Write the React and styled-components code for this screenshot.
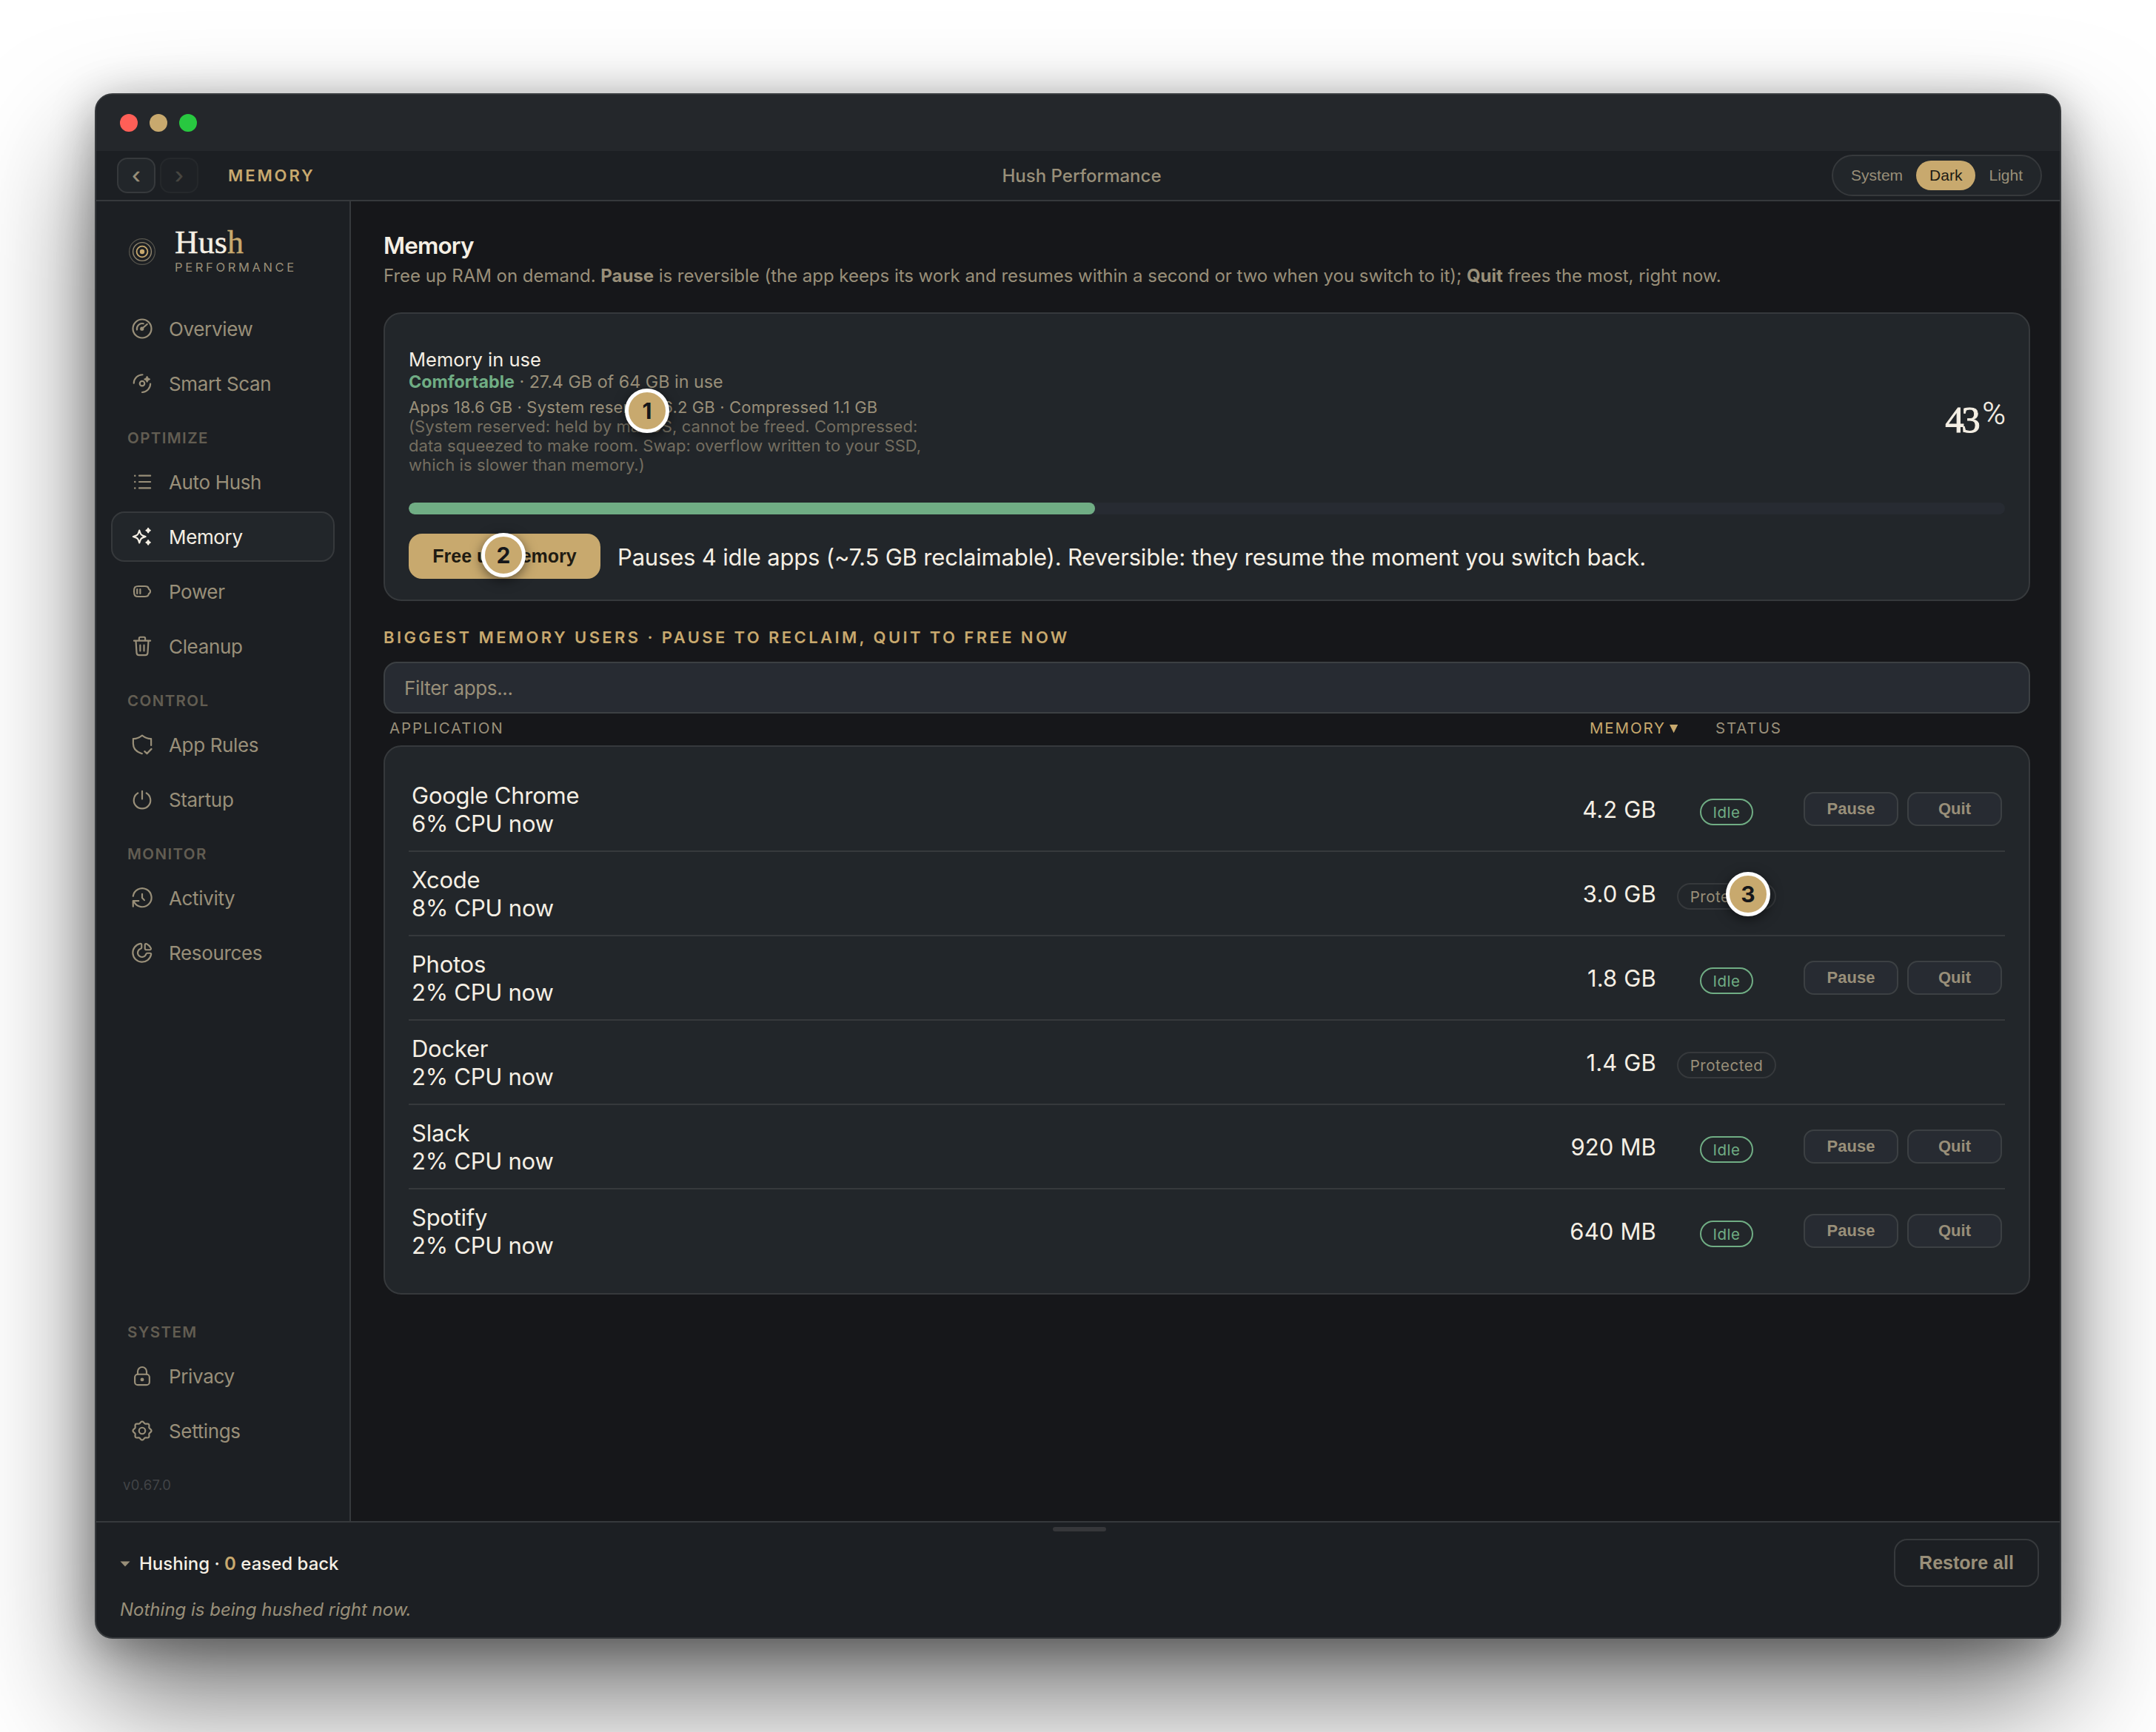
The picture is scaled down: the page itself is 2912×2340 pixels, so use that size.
import React, { useState } from "react";
import styled, { createGlobalStyle, css } from "styled-components";

const sans = `Inter, "Liberation Sans", sans-serif`;
const arial = `"Liberation Sans", Arial, sans-serif`;
const serif = `"Liberation Serif", "Times New Roman", serif`;

const c = {
  gold: "#c8a96e",
  cream: "#f5efe4",
  muted: "#998f79",
  dim: "#625d52",
  green: "#70ad84",
  line: "#36393c",
  panel: "#1c1f23",
  card: "#22262a",
  field: "#272b32",
  bg: "#16171a",
};

// eight soft lobes around a circle
const gearPath = () => {
  const pts = [];
  for (let i = 0; i < 96; i++) {
    const a = (i / 96) * Math.PI * 2;
    const r = 9.1 + 0.9 * Math.cos(8 * a);
    pts.push(`${(12 + r * Math.cos(a)).toFixed(2)} ${(12 + r * Math.sin(a)).toFixed(2)}`);
  }
  return `M${pts.join("L")}Z`;
};

const icons = {
  gauge: (
    <>
      <circle cx="12" cy="12" r="10" />
      <path d="M6.4 13.2A5.7 5.7 0 0 1 13.4 6.6M12.8 11.2 17.4 7.2" />
      <circle cx="11.8" cy="12.1" r="1.2" fill="currentColor" />
    </>
  ),
  scan: (
    <>
      <path d="M3 11.8A9.3 9.3 0 0 1 12.4 2.6M20.9 12.4A9.3 9.3 0 0 1 12 21.6" />
      <circle cx="12" cy="12.1" r="2.6" />
      <path d="M17.3 4.9l.8 1.8 1.8.8-1.8.8-.8 1.8-.8-1.8-1.8-.8 1.8-.8z" fill="currentColor" />
    </>
  ),
  list: (
    <>
      <path d="M8.8 5.3H20.9M8.8 12H20.9M8.8 18.7H20.9" />
      <path d="M4.2 5.3h.01M4.2 12h.01M4.2 18.7h.01" strokeWidth="2" />
    </>
  ),
  sparkles: (
    <>
      <path d="M9 5.3l1.1 3.1a4 4 0 0 0 2.5 2.5L15.7 12l-3.1 1.1a4 4 0 0 0-2.5 2.5L9 18.7l-1.1-3.1a4 4 0 0 0-2.5-2.5L2.3 12l3.1-1.1a4 4 0 0 0 2.5-2.5z" />
      <path
        d="M18.5 3.2l.7 1.4 1.4.7-1.4.7-.7 1.4-.7-1.4-1.4-.7 1.4-.7zM18.5 16.2l.7 1.4 1.4.7-1.4.7-.7 1.4-.7-1.4-1.4-.7 1.4-.7z"
        fill="currentColor"
      />
    </>
  ),
  battery: (
    <path d="M8 6.4h7c2.4 0 3.4.4 3.8 2 .2 1 .6 1.4 1.3 1.8.6.3.7.8.7 1.8s-.1 1.5-.7 1.8c-.7.4-1.1.8-1.3 1.8-.4 1.6-1.4 2-3.8 2H8c-3.6 0-4.8-1-4.8-5.6S4.4 6.4 8 6.4zM6.6 9.6v4.8M9.9 9.6v4.8" />
  ),
  trash: (
    <path d="M3.2 6.1H20.9M8.7 6V3.5c0-.8.5-1.3 1.3-1.3h4c.8 0 1.3.5 1.3 1.3V6M5.2 6.2l.8 12.9c.1 1.8.9 2.6 2.7 2.6h6.6c1.8 0 2.6-.8 2.7-2.6l.8-12.9M9.9 10.9v6.2M14 10.9v6.2" />
  ),
  shield: (
    <path d="M21.7 12.8V5.7c-3.7.2-6.2-1-9.7-3.6C8.500 4.700 6 5.900 2.300 5.700V11c0 5.700 3.800 9 9.600 10.800M14.700 19.300l2.500 2.400 4.800-5" />
  ),
  power: <path d="M12 3v8.500M7.400 5.200a9 9 0 1 0 9.200 0" />,
  history: (
    <path d="M2.200 10.200A10 10 0 1 1 3.200 16.400M2.200 21.300V15.300H8.200M12 7.800V12l2.300 2.500" />
  ),
  pie: (
    <path d="M10 2.300A10 10 0 1 0 21.700 14c.2-.8-.4-1.400-1.200-1.400h-3c-.6 0-1 .4-1.300 1A4.600 4.600 0 1 1 10.400 7.800c.6-.3 1-.7 1-1.300V3.500c0-.8-.6-1.400-1.400-1.200zM21.400 7.100a9.600 9.600 0 0 0-4.500-4.500c-1-.5-1.900.1-1.900 1.200v3.600c0 1 .7 1.600 1.600 1.600h3.600c1.100 0 1.700-.9 1.200-1.900z" />
  ),
  lock: (
    <>
      <path d="M7.200 10.200V7.200a4.800 4.800 0 0 1 9.600 0v3" />
      <rect x="4.100" y="10.200" width="15.800" height="11.500" rx="3.200" />
      <circle cx="12" cy="15.900" r="1.100" fill="currentColor" />
    </>
  ),
  gear: (
    <>
      <path d={gearPath()} />
      <circle cx="12" cy="12" r="3.400" />
    </>
  ),
};

const nav = [
  { items: [["gauge", "Overview"], ["scan", "Smart Scan"]] },
  {
    label: "Optimize",
    items: [["list", "Auto Hush"], ["sparkles", "Memory"], ["battery", "Power"], ["trash", "Cleanup"]],
  },
  { label: "Control", items: [["shield", "App Rules"], ["power", "Startup"]] },
  { label: "Monitor", items: [["history", "Activity"], ["pie", "Resources"]] },
  { label: "System", bottom: true, items: [["lock", "Privacy"], ["gear", "Settings"]] },
];

const apps = [
  { name: "Google Chrome", cpu: 6, mem: "4.2 GB", idle: true },
  { name: "Xcode", cpu: 8, mem: "3.0 GB", idle: false },
  { name: "Photos", cpu: 2, mem: "1.8 GB", idle: true },
  { name: "Docker", cpu: 2, mem: "1.4 GB", idle: false },
  { name: "Slack", cpu: 2, mem: "920 MB", idle: true },
  { name: "Spotify", cpu: 2, mem: "640 MB", idle: true },
];

const percent = 43;

const App = () => {
  const [page, setPage] = useState("Memory");
  const [theme, setTheme] = useState("Dark");
  const [filter, setFilter] = useState("");

  const shown = apps.filter((app) => app.name.toLowerCase().includes(filter.toLowerCase()));

  return (
    <>
      <GlobalStyle />
      <Backdrop>
        <Window>
          <TitleBar>
            <Light color="#ff5f57" />
            <Light color={c.gold} />
            <Light color="#28c840" />
          </TitleBar>

          <Toolbar>
            <ToolbarLeft>
              <ArrowButton>‹</ArrowButton>
              <ArrowButton disabled>›</ArrowButton>
              <Crumb>{page}</Crumb>
            </ToolbarLeft>
            <AppTitle>Hush Performance</AppTitle>
            <ThemeSwitch>
              {["System", "Dark", "Light"].map((t) => (
                <ThemeOption key={t} $on={t === theme} onClick={() => setTheme(t)}>
                  {t}
                </ThemeOption>
              ))}
            </ThemeSwitch>
          </Toolbar>

          <Body>
            <Sidebar>
              <Brand>
                <svg width="38" height="38" viewBox="0 0 38 38" fill="none">
                  <circle cx="19" cy="19" r="17.400" stroke="#57554d" strokeWidth="1.200" />
                  <circle cx="19" cy="19" r="12.400" stroke="#92876f" strokeWidth="1.400" />
                  <circle cx="19" cy="19" r="7.400" stroke={c.gold} strokeWidth="1.800" />
                  <circle cx="19" cy="19" r="3.200" fill={c.gold} />
                </svg>
                <div>
                  <Wordmark>
                    Hus<span>h</span>
                  </Wordmark>
                  <Tagline>PERFORMANCE</Tagline>
                </div>
              </Brand>

              {nav.map((group, i) => (
                <NavGroup key={i} $bottom={group.bottom}>
                  {group.label && <NavLabel>{group.label}</NavLabel>}
                  {group.items.map(([icon, name]) => (
                    <NavItem key={name} $active={name === page} onClick={() => setPage(name)}>
                      <NavIcon viewBox="0 0 24 24">{icons[icon]}</NavIcon>
                      {name}
                    </NavItem>
                  ))}
                </NavGroup>
              ))}
              <Version>v0.67.0</Version>
            </Sidebar>

            <Main>
              <Heading>Memory</Heading>
              <Intro>
                Free up RAM on demand. <b>Pause</b> is reversible (the app keeps its work and resumes
                within a second or two when you switch to it); <b>Quit</b> frees the most, right now.
              </Intro>

              <UsageCard>
                <UsageHead>
                  <UsageText>
                    <UsageTitle>Memory in use</UsageTitle>
                    <UsageState>
                      <b>Comfortable</b> · 27.4 GB of 64 GB in use
                    </UsageState>
                    <UsageSplit>
                      Apps 18.6 GB · System reserved 6.2 GB · Compressed 1.1 GB
                    </UsageSplit>
                    <UsageNote>
                      (System reserved: held by macOS, cannot be freed. Compressed: data squeezed to
                      make room. Swap: overflow written to your SSD, which is slower than memory.)
                    </UsageNote>
                  </UsageText>
                  <Percent>
                    {percent}
                    <span>%</span>
                  </Percent>
                </UsageHead>
                <Track>
                  <Fill style={{ width: `${percent}%` }} />
                </Track>
                <UsageActions>
                  <PrimaryButton>Free up memory</PrimaryButton>
                  <Hint>
                    Pauses 4 idle apps (~7.5 GB reclaimable). Reversible: they resume the moment you
                    switch back.
                  </Hint>
                </UsageActions>
              </UsageCard>

              <SectionLabel>Biggest memory users · Pause to reclaim, quit to free now</SectionLabel>
              <FilterInput
                placeholder="Filter apps..."
                value={filter}
                onChange={(ev) => setFilter(ev.target.value)}
              />

              <ColumnHead>
                <span>Application</span>
                <SortedColumn>
                  Memory
                  <svg width="12" height="13" viewBox="0 0 12 13">
                    <path d="M0 .5h12L6 12.500z" fill="currentColor" />
                  </svg>
                </SortedColumn>
                <span>Status</span>
              </ColumnHead>

              <AppsCard>
                {shown.map((app) => (
                  <AppRow key={app.name}>
                    <AppName>
                      <div>{app.name}</div>
                      <div>{app.cpu}% CPU now</div>
                    </AppName>
                    <AppMemory>{app.mem}</AppMemory>
                    <PillCell>
                      <Pill $idle={app.idle}>{app.idle ? "Idle" : "Protected"}</Pill>
                    </PillCell>
                    {app.idle && (
                      <RowActions>
                        <RowButton>Pause</RowButton>
                        <RowButton>Quit</RowButton>
                      </RowActions>
                    )}
                  </AppRow>
                ))}
              </AppsCard>
            </Main>
          </Body>

          <Footer>
            <Handle />
            <FooterRow>
              <FooterTitle>
                <svg width="14" height="8" viewBox="0 0 14 8">
                  <path d="M.5.500h13L7 7.500z" fill={c.muted} />
                </svg>
                <div>
                  Hushing · <b>0</b> eased back
                </div>
              </FooterTitle>
              <RestoreButton>Restore all</RestoreButton>
            </FooterRow>
            <FooterNote>Nothing is being hushed right now.</FooterNote>
          </Footer>

          <Marker $x={744} $y={427}>1</Marker>
          <Marker $x={550} $y={622}>2</Marker>
          <Marker $x={2231} $y={1080}>3</Marker>
        </Window>
      </Backdrop>
    </>
  );
};

const GlobalStyle = createGlobalStyle`
  * {
    box-sizing: border-box;
  }
  body {
    margin: 0;
    background: white;
    overflow: hidden;
  }
  button, input {
    margin: 0;
    padding: 0;
  }
`;

const Backdrop = styled.div`
  width: 2912px;
  height: 2340px;
  padding: 126px 128px;
  overflow: hidden;
  font-family: ${sans};
  color: ${c.cream};
`;

const Window = styled.div`
  position: relative;
  display: flex;
  flex-direction: column;
  height: 2088px;
  border: 2px solid ${c.line};
  border-radius: 24px;
  background: ${c.panel};
  box-shadow: 0 80px 160px rgba(0, 0, 0, 0.55), 0 12px 60px rgba(0, 0, 0, 0.32);
`;

const TitleBar = styled.div`
  display: flex;
  align-items: center;
  gap: 16px;
  height: 76px;
  padding: 0 32px;
  border-radius: 22px 22px 0 0;
  background: #24272b;
`;

const Light = styled.div`
  width: 24px;
  height: 24px;
  border-radius: 50%;
  background: ${(p) => p.color};
`;

const Toolbar = styled.div`
  display: grid;
  grid-template-columns: 1fr auto 1fr;
  align-items: center;
  height: 68px;
  padding: 0 24px 0 28px;
  border-bottom: 2px solid ${c.line};
`;

const ToolbarLeft = styled.div`
  display: flex;
  align-items: center;
  gap: 6px;
`;

const ArrowButton = styled.button`
  width: 52px;
  height: 48px;
  padding-bottom: 5px;
  border: 2px solid ${c.line};
  border-radius: 14px;
  background: ${c.card};
  color: ${c.muted};
  font: 34px/36px ${arial};
  -webkit-text-stroke: 0.4px;
  &:disabled {
    opacity: 0.35;
  }
`;

const Crumb = styled.div`
  margin-left: 34px;
  color: ${c.gold};
  font-size: 22px;
  font-weight: 600;
  letter-spacing: 2.9px;
  text-transform: uppercase;
`;

const AppTitle = styled.div`
  padding-left: 6px;
  color: ${c.muted};
  font-size: 24px;
  font-weight: 500;
`;

const ThemeSwitch = styled.div`
  justify-self: end;
  display: flex;
  padding: 6px;
  border: 2px solid ${c.line};
  border-radius: 28px;
  background: ${c.card};
`;

const ThemeOption = styled.button`
  height: 40px;
  padding: 0 18px;
  border: none;
  border-radius: 20px;
  background: ${(p) => (p.$on ? c.gold : "transparent")};
  color: ${(p) => (p.$on ? "#1c1a14" : c.muted)};
  font: 21px ${arial};
`;

const Body = styled.div`
  display: flex;
  flex: 1;
  min-height: 0;
`;

const Sidebar = styled.div`
  display: flex;
  flex-direction: column;
  width: 344px;
  padding: 0 20px;
  border-right: 2px solid ${c.line};
`;

const Brand = styled.div`
  display: flex;
  align-items: center;
  gap: 25px;
  height: 138px;
  padding: 0 0 2px 23px;
`;

const Wordmark = styled.div`
  font: 44px/43px ${serif};
  -webkit-text-stroke: 0.4px;
  span {
    color: ${c.gold};
  }
`;

const Tagline = styled.div`
  margin: 1px 0 2px;
  color: ${c.muted};
  font-size: 16.5px;
  line-height: 22px;
  letter-spacing: 3.65px;
`;

const NavGroup = styled.div`
  display: flex;
  flex-direction: column;
  gap: 6px;
  margin-top: ${(p) => (p.$bottom ? "auto" : 0)};
`;

const NavLabel = styled.div`
  margin-bottom: -6px;
  padding: 28px 22px 13px;
  color: ${c.dim};
  font-size: 20.5px;
  font-weight: 600;
  line-height: 24px;
  letter-spacing: 1.4px;
  text-transform: uppercase;
`;

const NavItem = styled.div`
  display: flex;
  align-items: center;
  gap: 21px;
  height: 68px;
  padding: 0 25px;
  border: 2px solid transparent;
  border-radius: 18px;
  color: ${c.muted};
  font-size: 26px;
  letter-spacing: -0.35px;
  ${(p) =>
    p.$active &&
    css`
      border-color: ${c.line};
      background: ${c.card};
      color: ${c.cream};
    `}
`;

const NavIcon = styled.svg`
  width: 30px;
  height: 30px;
  fill: none;
  stroke: currentColor;
  stroke-width: 1.75;
  stroke-linecap: round;
  stroke-linejoin: round;
`;

const Version = styled.div`
  padding: 27px 16px 37px;
  color: #424447;
  font-size: 18.5px;
  line-height: 24px;
  letter-spacing: 0.4px;
`;

const Main = styled.div`
  flex: 1;
  padding: 40px 40px 0 44px;
  background: ${c.bg};
`;

const Heading = styled.div`
  font-size: 31.5px;
  font-weight: 600;
  line-height: 40px;
  letter-spacing: -0.85px;
`;

const Intro = styled.div`
  margin-top: 6px;
  color: ${c.muted};
  font-size: 24px;
  line-height: 30px;
  letter-spacing: -0.03px;
  white-space: nowrap;
`;

const Card = styled.div`
  border: 2px solid ${c.line};
  border-radius: 24px;
  background: ${c.card};
`;

const UsageCard = styled(Card)`
  margin-top: 34px;
  padding: 28px 32px;
`;

const UsageHead = styled.div`
  display: flex;
  align-items: center;
  justify-content: space-between;
  padding: 18px 0;
`;

const UsageText = styled.div`
  width: 720px;
  white-space: nowrap;
`;

const UsageTitle = styled.div`
  font-size: 25.5px;
  line-height: 31px;
`;

const UsageState = styled.div`
  padding-top: 1px;
  color: ${c.muted};
  font-size: 23.3px;
  line-height: 28px;
  b {
    color: ${c.green};
  }
`;

const UsageSplit = styled.div`
  margin-top: 7px;
  color: ${c.muted};
  font-size: 22px;
  line-height: 26px;
  letter-spacing: 0.15px;
`;

const UsageNote = styled.div`
  color: #746e60;
  font-size: 22px;
  line-height: 26px;
  letter-spacing: 0.08px;
  white-space: normal;
`;

const Percent = styled.div`
  display: flex;
  padding: 22px 1px 0 0;
  font: 51px/60px ${serif};
  letter-spacing: -3.5px;
  -webkit-text-stroke: 0.9px;
  span {
    margin: -9px 0 0 6px;
    font-family: Roboto, sans-serif;
    font-weight: 300;
    font-size: 43px;
    letter-spacing: -2px;
    -webkit-text-stroke: 0.3px;
  }
`;

const Track = styled.div`
  height: 16px;
  margin-top: 20px;
  border-radius: 8px;
  background: ${c.field};
  overflow: hidden;
`;

const Fill = styled.div`
  height: 100%;
  border-radius: 8px;
  background: ${c.green};
`;

const UsageActions = styled.div`
  display: flex;
  align-items: center;
  gap: 23px;
  margin-top: 26px;
`;

const PrimaryButton = styled.button`
  width: 259px;
  height: 61px;
  border: none;
  border-radius: 18px;
  background: ${c.gold};
  color: #1f1b12;
  font: bold 25px ${arial};
`;

const Hint = styled.div`
  padding-top: 2px;
  font-size: 31px;
  line-height: 38px;
  letter-spacing: -0.17px;
  white-space: nowrap;
`;

const SectionLabel = styled.div`
  margin-top: 34px;
  color: ${c.gold};
  font-size: 22px;
  font-weight: 600;
  line-height: 30px;
  letter-spacing: 3.4px;
  text-transform: uppercase;
`;

const FilterInput = styled.input`
  display: block;
  width: 100%;
  height: 70px;
  margin-top: 18px;
  padding: 0 26px;
  border: 2px solid #3c4043;
  border-radius: 18px;
  background: ${c.field};
  color: ${c.cream};
  font: 26px ${sans};
  letter-spacing: -0.35px;
  outline: none;
  &::placeholder {
    color: ${c.muted};
  }
`;

const ColumnHead = styled.div`
  display: grid;
  grid-template-columns: 1fr 120px 372px;
  column-gap: 50px;
  align-items: start;
  height: 43px;
  padding: 7px 53px 0 8px;
  color: ${c.muted};
  font-size: 20.5px;
  line-height: 26px;
  letter-spacing: 1.85px;
  text-transform: uppercase;
`;

const SortedColumn = styled.div`
  display: flex;
  align-items: center;
  justify-content: flex-end;
  gap: 5px;
  padding-right: 1px;
  color: ${c.gold};
`;

const AppsCard = styled(Card)`
  padding: 28px 32px;
`;

const AppRow = styled.div`
  display: grid;
  grid-template-columns: 1fr 200px 134px 305px;
  align-items: center;
  height: 114px;
  padding: 0 4px;
  border-bottom: 2px solid ${c.line};
  font-size: 31px;
  line-height: 38px;
  &:last-child {
    height: 112px;
    border-bottom: none;
  }
`;

const AppName = styled.div`
  padding-top: 2px;
  letter-spacing: -0.25px;
`;

const AppMemory = styled.div`
  padding: 2px 28px 0 0;
  letter-spacing: 0.15px;
  text-align: right;
`;

const PillCell = styled.div`
  display: flex;
  justify-content: center;
  padding-top: 8px;
`;

const Pill = styled.div`
  height: 36px;
  padding: 0 16px;
  border: 2px solid ${(p) => (p.$idle ? c.green : c.line)};
  border-radius: 18px;
  color: ${(p) => (p.$idle ? c.green : c.muted)};
  font-size: 20.5px;
  line-height: 33px;
  letter-spacing: 0.5px;
`;

const RowActions = styled.div`
  display: flex;
  justify-content: flex-end;
  gap: 12px;
`;

const RowButton = styled.button`
  width: 128px;
  height: 46px;
  border: 2px solid #3c4043;
  border-radius: 14px;
  background: ${c.field};
  color: ${c.muted};
  font: bold 22px ${arial};
`;

const Footer = styled.div`
  height: 157px;
  padding: 6px 28px 0 32px;
  border-top: 2px solid ${c.line};
`;

const Handle = styled.div`
  width: 72px;
  height: 6px;
  margin: 0 auto;
  border-radius: 3px;
  background: #36373a;
`;

const FooterRow = styled.div`
  display: flex;
  align-items: center;
  justify-content: space-between;
  margin-top: 10px;
`;

const FooterTitle = styled.div`
  display: flex;
  align-items: center;
  gap: 12px;
  padding-top: 2px;
  font-size: 24px;
  font-weight: 500;
  b {
    color: ${c.gold};
    font-weight: 600;
  }
`;

const RestoreButton = styled.button`
  width: 196px;
  height: 65px;
  border: 2px solid ${c.line};
  border-radius: 18px;
  background: transparent;
  color: ${c.muted};
  font: bold 25px ${arial};
`;

const FooterNote = styled.div`
  margin-top: 16px;
  color: ${c.muted};
  font-size: 24px;
  font-style: italic;
  line-height: 30px;
`;

const Marker = styled.div`
  position: absolute;
  left: ${(p) => p.$x - 30}px;
  top: ${(p) => p.$y - 30}px;
  display: flex;
  align-items: center;
  justify-content: center;
  width: 60px;
  height: 60px;
  border: 5px solid white;
  border-radius: 50%;
  background: ${c.gold};
  color: #16171a;
  font-size: 30px;
  font-weight: 700;
  box-shadow: 0 4px 16px rgba(0, 0, 0, 0.5);
`;

export default App;
